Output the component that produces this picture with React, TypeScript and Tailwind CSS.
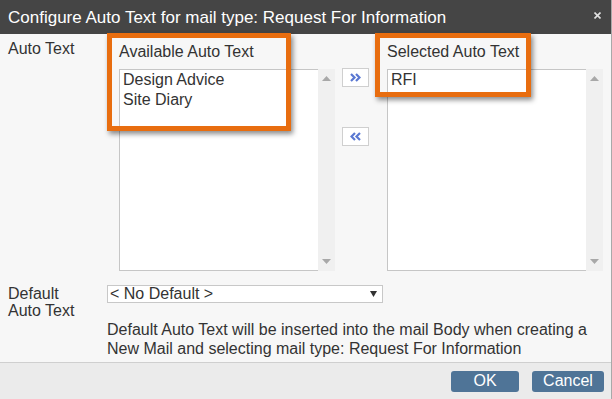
import React from "react";

const font = "font-['Liberation_Sans',Arial,sans-serif]";

function ScrollArrows() {
    return (
        <div className="w-[17px] bg-[#f0f0f0] flex flex-col justify-between items-center pt-[7px] pb-[7px]">
            <svg width="9" height="5" viewBox="0 0 9 5">
                <path d="M0 5 L4.5 0 L9 5 Z" fill="#a8a8a8" />
            </svg>
            <svg width="9" height="5" viewBox="0 0 9 5">
                <path d="M0 0 L4.5 5 L9 0 Z" fill="#a8a8a8" />
            </svg>
        </div>
    );
}

function ListColumn({ title, items }: { title: string; items: string[] }) {
    return (
        <div className="w-[216px] flex flex-col">
            <div className="h-[35px] pt-[9px] leading-[17px]">{title}</div>
            <div className="h-[202px] flex">
                <div className="flex-1 bg-white border-l border-t border-b border-[#c6c6c6] pl-[3px] pt-[0px] leading-[20px]">
                    {items.map((item) => (
                        <div key={item}>{item}</div>
                    ))}
                </div>
                <ScrollArrows />
            </div>
        </div>
    );
}

function MoveButton({ dir }: { dir: "right" | "left" }) {
    return (
        <button className="w-[27px] h-[19px] bg-white border border-[#cfcfcf] flex items-center justify-center">
            <svg width="11" height="9" viewBox="0 0 11 9">
                {dir === "right" ? (
                    <path
                        d="M1 1 L4.5 4.5 L1 8 M6 1 L9.5 4.5 L6 8"
                        stroke="#5a78d2"
                        strokeWidth="2.2"
                        fill="none"
                    />
                ) : (
                    <path
                        d="M5 1 L1.5 4.5 L5 8 M10 1 L6.5 4.5 L10 8"
                        stroke="#5a78d2"
                        strokeWidth="2.2"
                        fill="none"
                    />
                )}
            </svg>
        </button>
    );
}

export default function App() {
    return (
        <div
            className={`relative w-[612px] h-[399px] flex flex-col bg-[#f7f7f7] border-r border-[#a9a9a9] text-[#333] text-[16px] ${font}`}>
            <header className="h-[34px] shrink-0 bg-[#454545] flex items-center justify-between pl-[8px] pr-[10px]">
                <h1 className="text-[17px] text-white leading-none">
                    Configure Auto Text for mail type: Request For Information
                </h1>
                <svg width="7" height="7" viewBox="0 0 7 7" className="mb-[3px]">
                    <path d="M0.5 0.5 L6.5 6.5 M6.5 0.5 L0.5 6.5" stroke="#e0e0e0" strokeWidth="1.6" />
                </svg>
            </header>

            <div className="flex">
                <div className="w-[119px] pl-[8px] pt-[6px] leading-[17px]">Auto Text</div>
                <ListColumn title="Available Auto Text" items={["Design Advice", "Site Diary"]} />
                <div className="w-[52px] pl-[7px] pt-[34px] flex flex-col gap-[40px]">
                    <MoveButton dir="right" />
                    <MoveButton dir="left" />
                </div>
                <ListColumn title="Selected Auto Text" items={["RFI"]} />
            </div>

            <div className="flex mt-[14px]">
                <div className="w-[107px] pl-[8px] leading-[17px]">
                    Default
                    <br />
                    Auto Text
                </div>
                <div className="flex flex-col">
                    <div className="w-[276px] h-[18px] bg-white border border-[#c8c8c8] flex items-center justify-between pl-[2px] pr-[5px] leading-none">
                        <span>&lt; No Default &gt;</span>
                        <svg width="7" height="6" viewBox="0 0 7 6">
                            <path d="M0 0 L7 0 L3.5 6 Z" fill="#333" />
                        </svg>
                    </div>
                    <p className="mt-[17px] leading-[19px] whitespace-nowrap">
                        Default Auto Text will be inserted into the mail Body when creating a
                        <br />
                        New Mail and selecting mail type: Request For Information
                    </p>
                </div>
            </div>

            <footer className="mt-auto h-[37px] shrink-0 bg-[#ebebeb] border-t border-[#cfcfcf] flex items-center justify-end gap-[13px] pr-[7px]">
                <button className="w-[68px] h-[21px] rounded-[3px] bg-[#4f7497] text-white text-[16px] leading-none">
                    OK
                </button>
                <button className="w-[72px] h-[21px] rounded-[3px] bg-[#4f7497] text-white text-[16px] leading-none">
                    Cancel
                </button>
            </footer>

            {/* orange call-out frames */}
            <div className="absolute left-[107px] top-[33px] w-[184px] h-[98px] border-[5px] border-[#e86d0f] shadow-[2px_3px_5px_rgba(0,0,0,0.45)]" />
            <div className="absolute left-[375px] top-[33px] w-[156px] h-[64px] border-[5px] border-[#e86d0f] shadow-[2px_3px_5px_rgba(0,0,0,0.45)]" />
        </div>
    );
}
